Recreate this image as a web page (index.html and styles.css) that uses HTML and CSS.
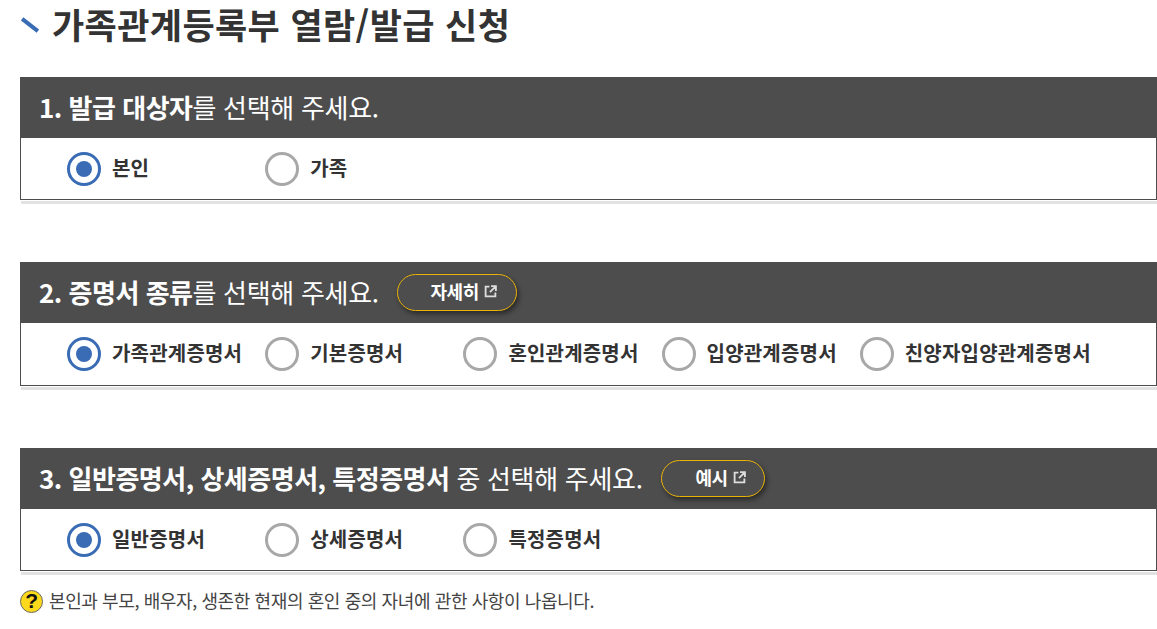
FILE: index.html
```html
<!DOCTYPE html>
<html lang="ko">
<head>
    <meta charset="UTF-8">
    <title>가족관계등록부 열람/발급 신청</title>
    <link rel="stylesheet" href="styles.css">
</head>
<body>
<div class="container">
    <h1 class="pageTitle">
        <span class="titleMark"></span><span class="titleText">가족관계등록부 열람/발급 신청</span>
    </h1>

    <section class="box">
        <div class="boxHead">
            <h2 class="boxTitle"><b>1. 발급 대상자</b>를 선택해 주세요.</h2>
        </div>
        <div class="options">
            <label class="option"><span class="radio checked"></span><span class="optionText">본인</span></label>
            <label class="option"><span class="radio"></span><span class="optionText">가족</span></label>
        </div>
    </section>

    <section class="box">
        <div class="boxHead">
            <h2 class="boxTitle"><b>2. 증명서 종류</b>를 선택해 주세요.</h2>
            <button type="button" class="headBtn btnLong"><span class="btnText">자세히</span>
                <svg class="linkIcon" viewBox="0 0 12 12"><path d="M5 1.500H1.500v9h9V7M6.500 1H11v4.500M11 1 5.500 6.500" fill="none" stroke="currentColor" stroke-width="1.700"/></svg>
            </button>
        </div>
        <div class="options optionsTall">
            <label class="option"><span class="radio checked"></span><span class="optionText">가족관계증명서</span></label>
            <label class="option"><span class="radio"></span><span class="optionText">기본증명서</span></label>
            <label class="option"><span class="radio"></span><span class="optionText">혼인관계증명서</span></label>
            <label class="option"><span class="radio"></span><span class="optionText">입양관계증명서</span></label>
            <label class="option"><span class="radio"></span><span class="optionText">친양자입양관계증명서</span></label>
        </div>
    </section>

    <section class="box">
        <div class="boxHead">
            <h2 class="boxTitle"><b>3. 일반증명서, 상세증명서, 특정증명서</b> 중 선택해 주세요.</h2>
            <button type="button" class="headBtn btnShort"><span class="btnText">예시</span>
                <svg class="linkIcon" viewBox="0 0 12 12"><path d="M5 1.500H1.500v9h9V7M6.500 1H11v4.500M11 1 5.500 6.500" fill="none" stroke="currentColor" stroke-width="1.700"/></svg>
            </button>
        </div>
        <div class="options">
            <label class="option"><span class="radio checked"></span><span class="optionText">일반증명서</span></label>
            <label class="option"><span class="radio"></span><span class="optionText">상세증명서</span></label>
            <label class="option"><span class="radio"></span><span class="optionText">특정증명서</span></label>
        </div>
    </section>

    <p class="note"><span class="noteIcon">?</span><span class="noteText">본인과 부모, 배우자, 생존한 현재의 혼인 중의 자녀에 관한 사항이 나옵니다.</span></p>
</div>
</body>
</html>
```

FILE: styles.css
```css
* {
    box-sizing: border-box;
}

body {
    margin: 0;
    background-color: white;
    color: #333;
    font-family: "Noto Sans CJK KR", "Noto Sans", sans-serif;
}

.container {
    padding: 0 0 0 20px;
}

.pageTitle {
    display: flex;
    align-items: flex-start;
    height: 52px;
    margin: 0 0 25px;
    font-size: 35px;
    font-weight: 700;
    line-height: 47px;
    color: #333;
}

.titleText {
    letter-spacing: 0.4px;
}

.titleMark {
    flex: none;
    width: 20px;
    height: 4px;
    margin: 23px 12px 0 0;
    background-color: #3a6cb5;
    transform: rotate(38deg);
}

.box {
    margin-bottom: 58px;
}

.box::after {
    content: "";
    display: block;
    height: 3px;
    margin: 1px 0 0 1px;
    background-color: #e2e2e2;
}

.box:nth-of-type(3) {
    margin-bottom: 0;
}

.boxHead {
    display: flex;
    align-items: center;
    height: 61px;
    padding-left: 19px;
    background-color: #4d4d4d;
    color: white;
}

.boxTitle {
    margin: 0 0 2px;
    font-size: 26px;
    font-weight: 400;
    letter-spacing: -0.3px;
}

.boxTitle b {
    font-weight: 700;
    letter-spacing: -0.5px;
}

.headBtn {
    display: flex;
    align-items: center;
    justify-content: flex-end;
    height: 37px;
    margin-left: 18px;
    border: 1px solid #eab308;
    border-radius: 19px;
    background-color: #4d4d4d;
    box-shadow: 2px 3px 5px rgba(0, 0, 0, 0.45);
    color: white;
    font-family: inherit;
    font-size: 18px;
    font-weight: 700;
    letter-spacing: -0.5px;
}

.btnText {
    margin-bottom: 3px;
}

.btnLong {
    width: 120px;
    padding-right: 19px;
}

.btnShort {
    width: 104px;
    padding-right: 18px;
}

.linkIcon {
    width: 13px;
    height: 13px;
    margin: 0 0 2px 5px;
    color: #ddd;
}

.options {
    display: flex;
    align-items: center;
    height: 62px;
    padding-left: 46px;
    border: 1px solid #4d4d4d;
    border-top: 0;
}

.optionsTall {
    height: 63px;
}

.option {
    display: flex;
    align-items: center;
    width: 198.200px;
    font-size: 20px;
    font-weight: 700;
    color: #333;
    white-space: nowrap;
    letter-spacing: 0.2px;
}

.optionText {
    margin-bottom: 3px;
}

.radio {
    display: flex;
    align-items: center;
    justify-content: center;
    flex: none;
    width: 34px;
    height: 34px;
    margin-right: 11px;
    border: 3px solid #a8a8a8;
    border-radius: 50%;
    background-color: white;
}

.radio.checked {
    border-color: #3a6cb5;
}

.radio.checked::after {
    content: "";
    width: 16px;
    height: 16px;
    border-radius: 50%;
    background-color: #3a6cb5;
}

.note {
    display: flex;
    align-items: center;
    margin: 12px 0 0;
    font-size: 18px;
    letter-spacing: -0.4px;
    color: #444;
}

.noteText {
    margin-bottom: 2px;
}

.noteIcon {
    display: flex;
    align-items: center;
    justify-content: center;
    width: 23px;
    height: 23px;
    margin-right: 6px;
    border: 1.500px solid #666;
    border-radius: 50%;
    background-color: #fdd91c;
    color: #111;
    font-family: "Liberation Sans", sans-serif;
    font-size: 21px;
    font-weight: 700;
}
```
